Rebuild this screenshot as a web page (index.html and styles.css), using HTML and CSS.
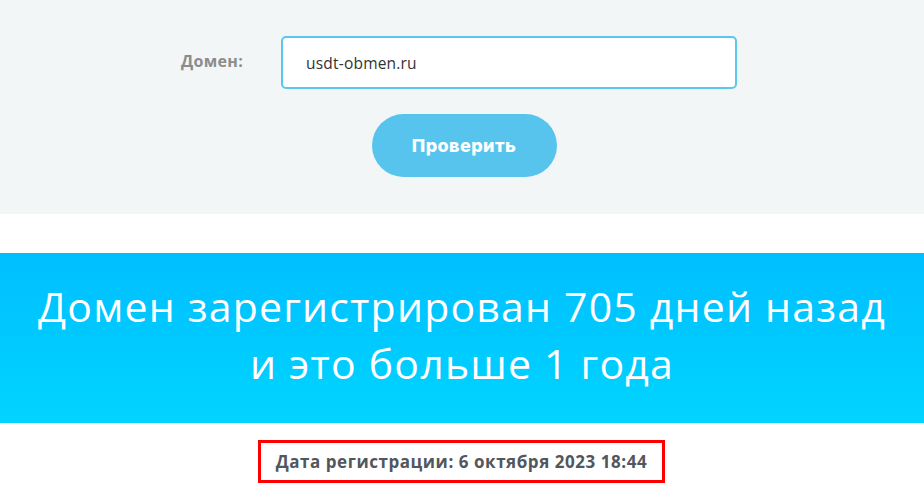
FILE: index.html
```html
<!DOCTYPE html>
<html lang="ru">
<head>
    <meta charset="UTF-8">
    <meta name="viewport" content="width=device-width, initial-scale=1.0">
    <title>Проверка возраста домена</title>
    <link rel="stylesheet" href="styles.css">
</head>
<body>
    <section class="check">
        <form class="check-form" onsubmit="return false;">
            <div class="row">
                <label class="label" for="domain">Домен:</label>
                <input class="input" id="domain" type="text" value="usdt-obmen.ru">
            </div>
            <button class="button" type="submit">Проверить</button>
        </form>
    </section>

    <section class="result">
        <h1>Домен зарегистрирован 705 дней назад<br>и это больше 1 года</h1>
    </section>

    <div class="details">
        <div class="date">Дата регистрации: 6 октября 2023 18:44</div>
    </div>
</body>
</html>
```

FILE: styles.css
```css
* {
    margin: 0;
    padding: 0;
    box-sizing: border-box;
}

body {
    font-family: "Open Sans", "Liberation Sans", sans-serif;
    background: #fff;
    color: #333;
}

.check {
    background: #f3f6f7;
    height: 214px;
    padding-top: 36px;
}

.check-form {
    display: flex;
    flex-direction: column;
    align-items: center;
}

.row {
    display: flex;
    align-items: center;
    gap: 38px;
    margin-left: -6px;
}

.label {
    font-size: 16px;
    font-weight: 700;
    letter-spacing: 0.3px;
    color: #8c8c8c;
    margin-top: -4px;
}

.input {
    width: 456px;
    height: 53px;
    border: 2px solid #5ac8ee;
    border-radius: 5px;
    padding: 0 23px;
    font-family: inherit;
    font-size: 15.5px;
    letter-spacing: 0.2px;
    color: #333;
    background: #fff;
    outline: none;
}

.button {
    margin-top: 25px;
    margin-left: 4px;
    width: 185px;
    height: 63px;
    border: none;
    border-radius: 32px;
    background: #56c4ec;
    color: #fff;
    font-family: Inter, "Open Sans", sans-serif;
    font-size: 18px;
    font-weight: 800;
    letter-spacing: 0.4px;
    cursor: pointer;
}

.result {
    margin-top: 39px;
    height: 170px;
    background: linear-gradient(180deg, #00bfff 0%, #00d4ff 100%);
    display: flex;
    align-items: center;
    justify-content: center;
    text-align: center;
}

.result h1 {
    font-size: 41px;
    font-weight: 400;
    line-height: 57px;
    color: #fff;
    letter-spacing: 1.2px;
    margin-top: -6px;
}

.details {
    display: flex;
    justify-content: center;
    padding-top: 17px;
}

.date {
    width: 407px;
    height: 43px;
    border: 3px solid #ff0000;
    display: flex;
    align-items: center;
    justify-content: center;
    font-size: 17px;
    font-weight: 700;
    letter-spacing: 0.55px;
    color: #52565d;
    margin-left: -1px;
}
```
